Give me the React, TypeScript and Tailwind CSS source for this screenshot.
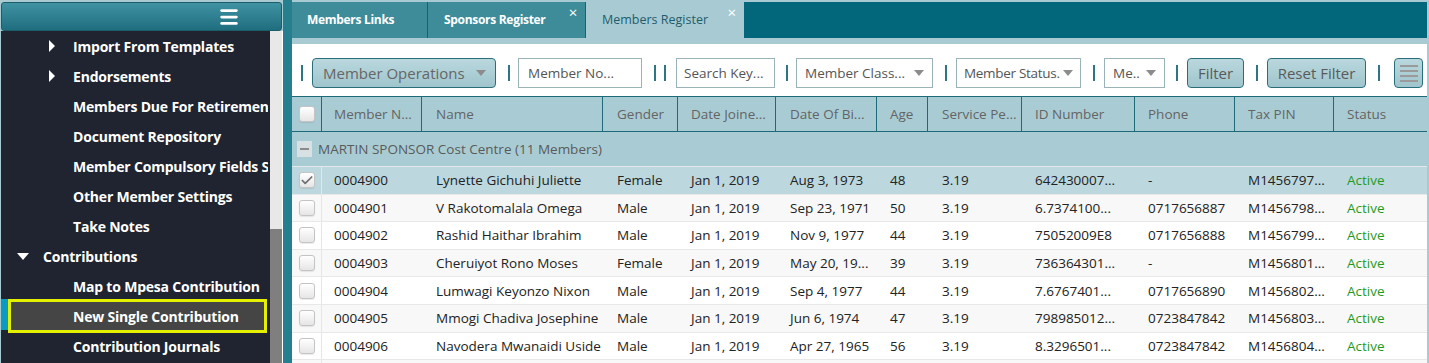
import { Check, Menu } from 'lucide-react'

const menuItems = [
  { label: 'Import From Templates', arrow: 'right' },
  { label: 'Endorsements', arrow: 'right' },
  { label: 'Members Due For Retirement' },
  { label: 'Document Repository' },
  { label: 'Member Compulsory Fields Setup' },
  { label: 'Other Member Settings' },
  { label: 'Take Notes' },
  { label: 'Contributions', arrow: 'down', top: true },
  { label: 'Map to Mpesa Contribution' },
  { label: 'New Single Contribution', selected: true },
  { label: 'Contribution Journals' },
]

const columns = [
  { label: 'Member N...', w: 'w-[100px] pl-[12px]' },
  { label: 'Name', w: 'w-[181px] pl-[14px]' },
  { label: 'Gender', w: 'w-[75px] pl-[14px]' },
  { label: 'Date Joine...', w: 'w-[98px] pl-[13px]' },
  { label: 'Date Of Bi...', w: 'w-[101px] pl-[14px]' },
  { label: 'Age', w: 'w-[51px] pl-[13px]' },
  { label: 'Service Pe...', w: 'w-[94px] pl-[14px]' },
  { label: 'ID Number', w: 'w-[113px] pl-[13px]' },
  { label: 'Phone', w: 'w-[100px] pl-[13px]' },
  { label: 'Tax PIN', w: 'w-[99px] pl-[13px]' },
  { label: 'Status', w: 'flex-1 pl-[13px]' },
]

const members = [
  ['0004900', 'Lynette Gichuhi Juliette', 'Female', 'Jan 1, 2019', 'Aug 3, 1973', '48', '3.19', '642430007...', '-', 'M1456797...'],
  ['0004901', 'V Rakotomalala Omega', 'Male', 'Jan 1, 2019', 'Sep 23, 1971', '50', '3.19', '6.7374100...', '0717656887', 'M1456798...'],
  ['0004902', 'Rashid Haithar Ibrahim', 'Male', 'Jan 1, 2019', 'Nov 9, 1977', '44', '3.19', '75052009E8', '0717656888', 'M1456799...'],
  ['0004903', 'Cheruiyot Rono Moses', 'Female', 'Jan 1, 2019', 'May 20, 19...', '39', '3.19', '736364301...', '-', 'M1456801...'],
  ['0004904', 'Lumwagi Keyonzo Nixon', 'Male', 'Jan 1, 2019', 'Sep 4, 1977', '44', '3.19', '7.6767401...', '0717656890', 'M1456802...'],
  ['0004905', 'Mmogi Chadiva Josephine', 'Male', 'Jan 1, 2019', 'Jun 6, 1974', '47', '3.19', '798985012...', '0723847842', 'M1456803...'],
  ['0004906', 'Navodera Mwanaidi Uside', 'Male', 'Jan 1, 2019', 'Apr 27, 1965', '56', '3.19', '8.3296501...', '0723847842', 'M1456804...'],
]

function Bar({ ml }: { ml: string }) {
  return <div className={`${ml} h-[16px] w-[2px] shrink-0 bg-[#2d7683]`} />
}

function Caret({ className = 'ml-auto' }: { className?: string }) {
  return <span className={`${className} h-0 w-0 shrink-0 border-x-[5px] border-t-[6px] border-x-transparent border-t-[#8c8c8c]`} />
}

function Checkbox({ checked }: { checked?: boolean }) {
  return (
    <div className="flex h-[16px] w-[16px] items-center justify-center rounded-[3px] border border-[#c4c4c4] bg-gradient-to-b from-white to-[#e6e6e6] shadow-[0_1px_1px_rgba(0,0,0,0.08)]">
      {checked && <Check className="h-[15px] w-[15px] text-[#6f6f6f]" strokeWidth={3} />}
    </div>
  )
}

export default function App() {
  return (
    <div className="flex h-[363px] w-[1429px] overflow-hidden bg-[#267f8f] font-['Open_Sans',sans-serif]">
      {/* sidebar */}
      <aside className="flex w-[283px] shrink-0 flex-col bg-[#a9cad1] pl-[1px] pt-[2px]">
        <div className="flex h-[29px] w-[281px] items-center justify-end rounded-[3px] border border-[#1c5d6a] bg-gradient-to-b from-[#3f93a3] to-[#1f6e7f] pr-[41px]">
          <Menu className="h-[22px] w-[22px] text-white" strokeWidth={3} />
        </div>
        <div className="flex flex-1 border-r border-white">
          <div className="w-[269px] bg-[#1f2430]">
            {menuItems.map((m) => {
              if (m.selected) {
                return (
                  <div key={m.label} className="-my-[2px] flex h-[34px] items-start">
                    <div className="h-[31px] w-[7px] bg-[#0b9ac0]" />
                    <div className="flex h-[34px] w-[259px] items-center overflow-hidden whitespace-nowrap border-[3px] border-[#e3f000] bg-[#454545] pl-[62px] text-[14px] font-bold tracking-[-0.2px] text-white">
                      {m.label}
                    </div>
                  </div>
                )
              }
              return (
                <div
                  key={m.label}
                  className={`flex h-[30px] w-[267px] items-center overflow-hidden whitespace-nowrap text-[14px] font-bold tracking-[-0.2px] text-white ${m.top ? 'pl-[16px]' : 'pl-[48px]'}`}
                >
                  <span className="flex w-[24px] shrink-0 items-center">
                    {m.arrow === 'right' && (
                      <span className="h-0 w-0 border-y-[6px] border-l-[6px] border-y-transparent border-l-white" />
                    )}
                    {m.arrow === 'down' && (
                      <span className="h-0 w-0 border-x-[6px] border-t-[7px] border-x-transparent border-t-white" />
                    )}
                  </span>
                  <span className={m.top ? 'ml-[2px]' : ''}>{m.label}</span>
                </div>
              )
            })}
          </div>
          <div className="flex w-[12px] flex-col bg-[#e8e8e8]">
            <div className="h-[198px]" />
            <div className="flex-1 bg-[#7f7f7f]" />
          </div>
        </div>
      </aside>

      {/* main */}
      <main className="ml-[9px] flex w-[1137px] shrink-0 flex-col bg-[#a8cbd3] pr-[2px] pt-[2px]">
        <div className="flex h-[36px] shrink-0 bg-[#02677a] text-[12px] font-bold tracking-[-0.3px]">
          <div className="flex w-[136px] items-center border-r border-[#1f5f6b] bg-[#3e8c9a] pl-[15px] text-white">Members Links</div>
          <div className="relative flex w-[158px] items-center border-r border-[#1f5f6b] bg-[#3e8c9a] pl-[16px] text-white">
            Sponsors Register
            <span className="absolute right-[8px] top-[1px] text-[15px] font-normal leading-[18px] text-white">×</span>
          </div>
          <div className="relative flex w-[158px] items-center bg-[#a8cbd3] pl-[16px] text-[12.5px] font-normal tracking-normal text-[#1f5c6b]">
            Members Register
            <span className="absolute right-[8px] top-[1px] text-[15px] leading-[18px] text-white">×</span>
          </div>
        </div>
        <div className="h-[6px] shrink-0" />

        {/* toolbar */}
        <div className="flex h-[52px] shrink-0 items-center bg-white pt-[6px] text-[#5e5e5e]">
          <Bar ml="ml-[9px]" />
          <div className="ml-[9px] flex h-[30px] w-[184px] items-center whitespace-nowrap rounded-[4px] border border-[#2b6e7b] bg-gradient-to-b from-[#b9d8de] to-[#a0c5cd] px-[10px] text-[15px] text-[#666]">
            Member Operations
            <Caret className="ml-[11px]" />
          </div>
          <Bar ml="ml-[12px]" />
          <div className="ml-[8px] flex h-[30px] w-[124px] items-center border border-[#9ab3b9] pl-[9px] text-[13.5px] text-[#555]">Member No...</div>
          <Bar ml="ml-[12px]" />
          <Bar ml="ml-[8px]" />
          <div className="ml-[10px] flex h-[30px] w-[99px] items-center border border-[#9ab3b9] pl-[7px] text-[13.5px] text-[#555]">Search Key...</div>
          <Bar ml="ml-[11px]" />
          <div className="ml-[8px] flex h-[30px] w-[137px] items-center whitespace-nowrap border border-[#9ab3b9] px-[8px] text-[13.5px] text-[#555]">
            Member Class...
            <Caret />
          </div>
          <Bar ml="ml-[12px]" />
          <div className="ml-[9px] flex h-[30px] w-[125px] items-center overflow-hidden whitespace-nowrap border border-[#9ab3b9] px-[7px] text-[13.5px] tracking-[-0.3px] text-[#555]">
            Member Status.
            <Caret />
          </div>
          <Bar ml="ml-[12px]" />
          <div className="ml-[9px] flex h-[30px] w-[61px] items-center whitespace-nowrap border border-[#9ab3b9] px-[8px] text-[13.5px] text-[#555]">
            Me..
            <Caret />
          </div>
          <Bar ml="ml-[11px]" />
          <div className="ml-[9px] flex h-[30px] w-[57px] items-center justify-center rounded-[4px] border border-[#2b6e7b] bg-gradient-to-b from-[#b9d8de] to-[#a0c5cd] text-[15px] text-[#5a5a5a]">Filter</div>
          <Bar ml="ml-[12px]" />
          <div className="ml-[9px] flex h-[30px] w-[99px] items-center justify-center whitespace-nowrap rounded-[4px] border border-[#2b6e7b] bg-gradient-to-b from-[#b9d8de] to-[#a0c5cd] text-[15px] text-[#5a5a5a]">Reset Filter</div>
          <Bar ml="ml-[12px]" />
          <div className="ml-[14px] flex h-[30px] w-[29px] flex-col items-center justify-center gap-[3px] rounded-[4px] border border-[#2b6e7b] bg-gradient-to-b from-[#b9d8de] to-[#a0c5cd]">
            <span className="h-[2px] w-[18px] bg-[#9a9a9a]" />
            <span className="h-[2px] w-[18px] bg-[#9a9a9a]" />
            <span className="h-[2px] w-[18px] bg-[#9a9a9a]" />
            <span className="h-[2px] w-[18px] bg-[#9a9a9a]" />
          </div>
        </div>

        {/* table */}
        <div className="flex-1 bg-white">
          <div className="flex h-[36px] border-y border-[#1d6a78] bg-[#a9ccd4] text-[13.5px] text-[#646464]">
            <div className="flex w-[30px] items-center justify-center border-r border-[#1d6a78]">
              <Checkbox />
            </div>
            {columns.map((c, i) => (
              <div
                key={c.label}
                className={`flex items-center whitespace-nowrap ${c.w} ${i < columns.length - 1 ? 'border-r border-[#1d6a78]' : ''}`}
              >
                {c.label}
              </div>
            ))}
          </div>
          <div className="flex h-[35px] items-center border-b border-[#e2e8ea] bg-[#a9ccd4] text-[13.5px] text-[#5a5a5a]">
            <div className="ml-[5px] flex h-[16px] w-[15px] items-center justify-center bg-[#d7e1e3]">
              <span className="h-[2px] w-[9px] bg-[#8a8a8a]" />
            </div>
            <span className="ml-[6px]">MARTIN SPONSOR Cost Centre (11 Members)</span>
          </div>
          {members.map((r, idx) => (
            <div
              key={r[0]}
              className={`flex h-[27.6px] border-b border-[#e8e8e8] text-[13.5px] text-[#222] ${idx === 0 ? 'bg-[#bcd8de]' : idx % 2 === 1 ? 'bg-[#f8f8f8]' : 'bg-white'}`}
            >
              <div className="flex w-[30px] items-center justify-center border-r border-[#e6e6e6]">
                <Checkbox checked={idx === 0} />
              </div>
              {r.map((v, i) => (
                <div key={i} className={`flex items-center whitespace-nowrap ${columns[i].w}`}>
                  {v}
                </div>
              ))}
              <div className={`flex items-center ${columns[10].w} text-[#1f9a1f]`}>Active</div>
            </div>
          ))}
          <div className="flex h-[27.6px] bg-[#f8f8f8]">
            <div className="w-[30px] border-r border-[#e6e6e6]" />
          </div>
        </div>
      </main>
    </div>
  )
}
